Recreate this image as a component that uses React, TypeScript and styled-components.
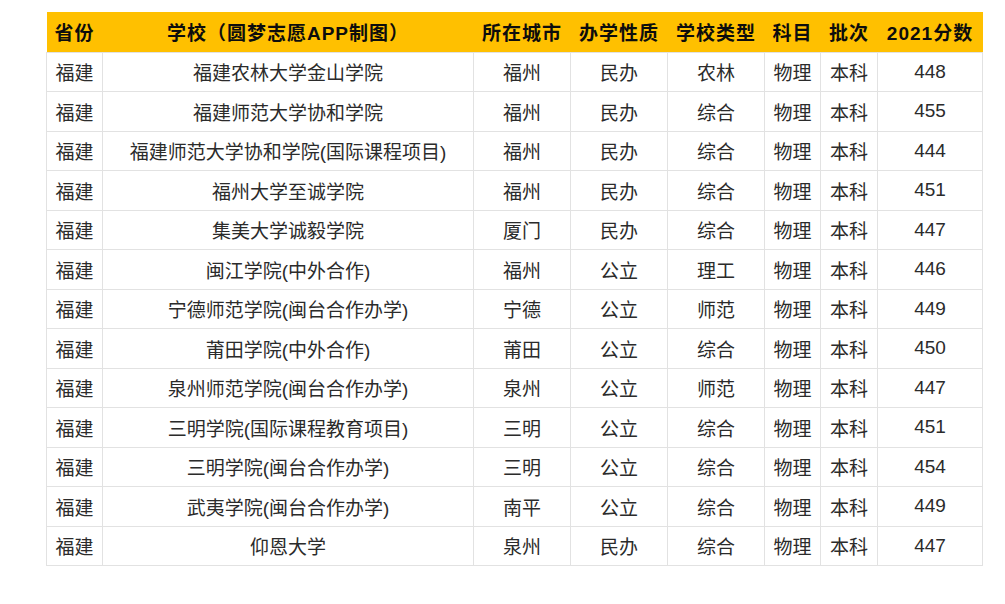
import React from 'react';
import styled, { createGlobalStyle } from 'styled-components';

const GlobalStyle = createGlobalStyle`
  html, body {
    margin: 0;
    padding: 0;
    background: #ffffff;
  }
  body {
    font-family: 'Liberation Sans', 'Noto Sans CJK SC', sans-serif;
  }
`;

const Page = styled.div`
  padding: 12px 0 0 46px;
`;

const Table = styled.table`
  width: 936px;
  border-collapse: collapse;
  table-layout: fixed;
  font-size: 19px;
`;

const HeadRow = styled.tr`
  background: #ffc000;
  height: 40px;
`;

const Th = styled.th`
  padding: 0;
  font-weight: 700;
  color: #0d0d0d;
  letter-spacing: 1px;
  text-align: center;
  white-space: nowrap;
`;

const Row = styled.tr`
  height: 39.5px;
`;

const Td = styled.td`
  padding: 0;
  border: 1px solid #e2e2e2;
  color: #2b2b2b;
  text-align: center;
  white-space: nowrap;
`;

const widths = [56, 371, 97, 97, 97, 56, 57, 105];
const headers = ['省份', '学校（圆梦志愿APP制图）', '所在城市', '办学性质', '学校类型', '科目', '批次', '2021分数'];

const rows: string[][] = [
  ['福建农林大学金山学院', '福州', '民办', '农林', '448'],
  ['福建师范大学协和学院', '福州', '民办', '综合', '455'],
  ['福建师范大学协和学院(国际课程项目)', '福州', '民办', '综合', '444'],
  ['福州大学至诚学院', '福州', '民办', '综合', '451'],
  ['集美大学诚毅学院', '厦门', '民办', '综合', '447'],
  ['闽江学院(中外合作)', '福州', '公立', '理工', '446'],
  ['宁德师范学院(闽台合作办学)', '宁德', '公立', '师范', '449'],
  ['莆田学院(中外合作)', '莆田', '公立', '综合', '450'],
  ['泉州师范学院(闽台合作办学)', '泉州', '公立', '师范', '447'],
  ['三明学院(国际课程教育项目)', '三明', '公立', '综合', '451'],
  ['三明学院(闽台合作办学)', '三明', '公立', '综合', '454'],
  ['武夷学院(闽台合作办学)', '南平', '公立', '综合', '449'],
  ['仰恩大学', '泉州', '民办', '综合', '447'],
];

export default function App() {
  return (
    <Page>
      <GlobalStyle />
      <Table>
        <colgroup>
          {widths.map((w, i) => (
            <col key={i} style={{ width: w }} />
          ))}
        </colgroup>
        <thead>
          <HeadRow>
            {headers.map((h) => (
              <Th key={h}>{h}</Th>
            ))}
          </HeadRow>
        </thead>
        <tbody>
          {rows.map(([school, city, kind, type, score]) => (
            <Row key={school}>
              <Td>福建</Td>
              <Td>{school}</Td>
              <Td>{city}</Td>
              <Td>{kind}</Td>
              <Td>{type}</Td>
              <Td>物理</Td>
              <Td>本科</Td>
              <Td>{score}</Td>
            </Row>
          ))}
        </tbody>
      </Table>
    </Page>
  );
}
